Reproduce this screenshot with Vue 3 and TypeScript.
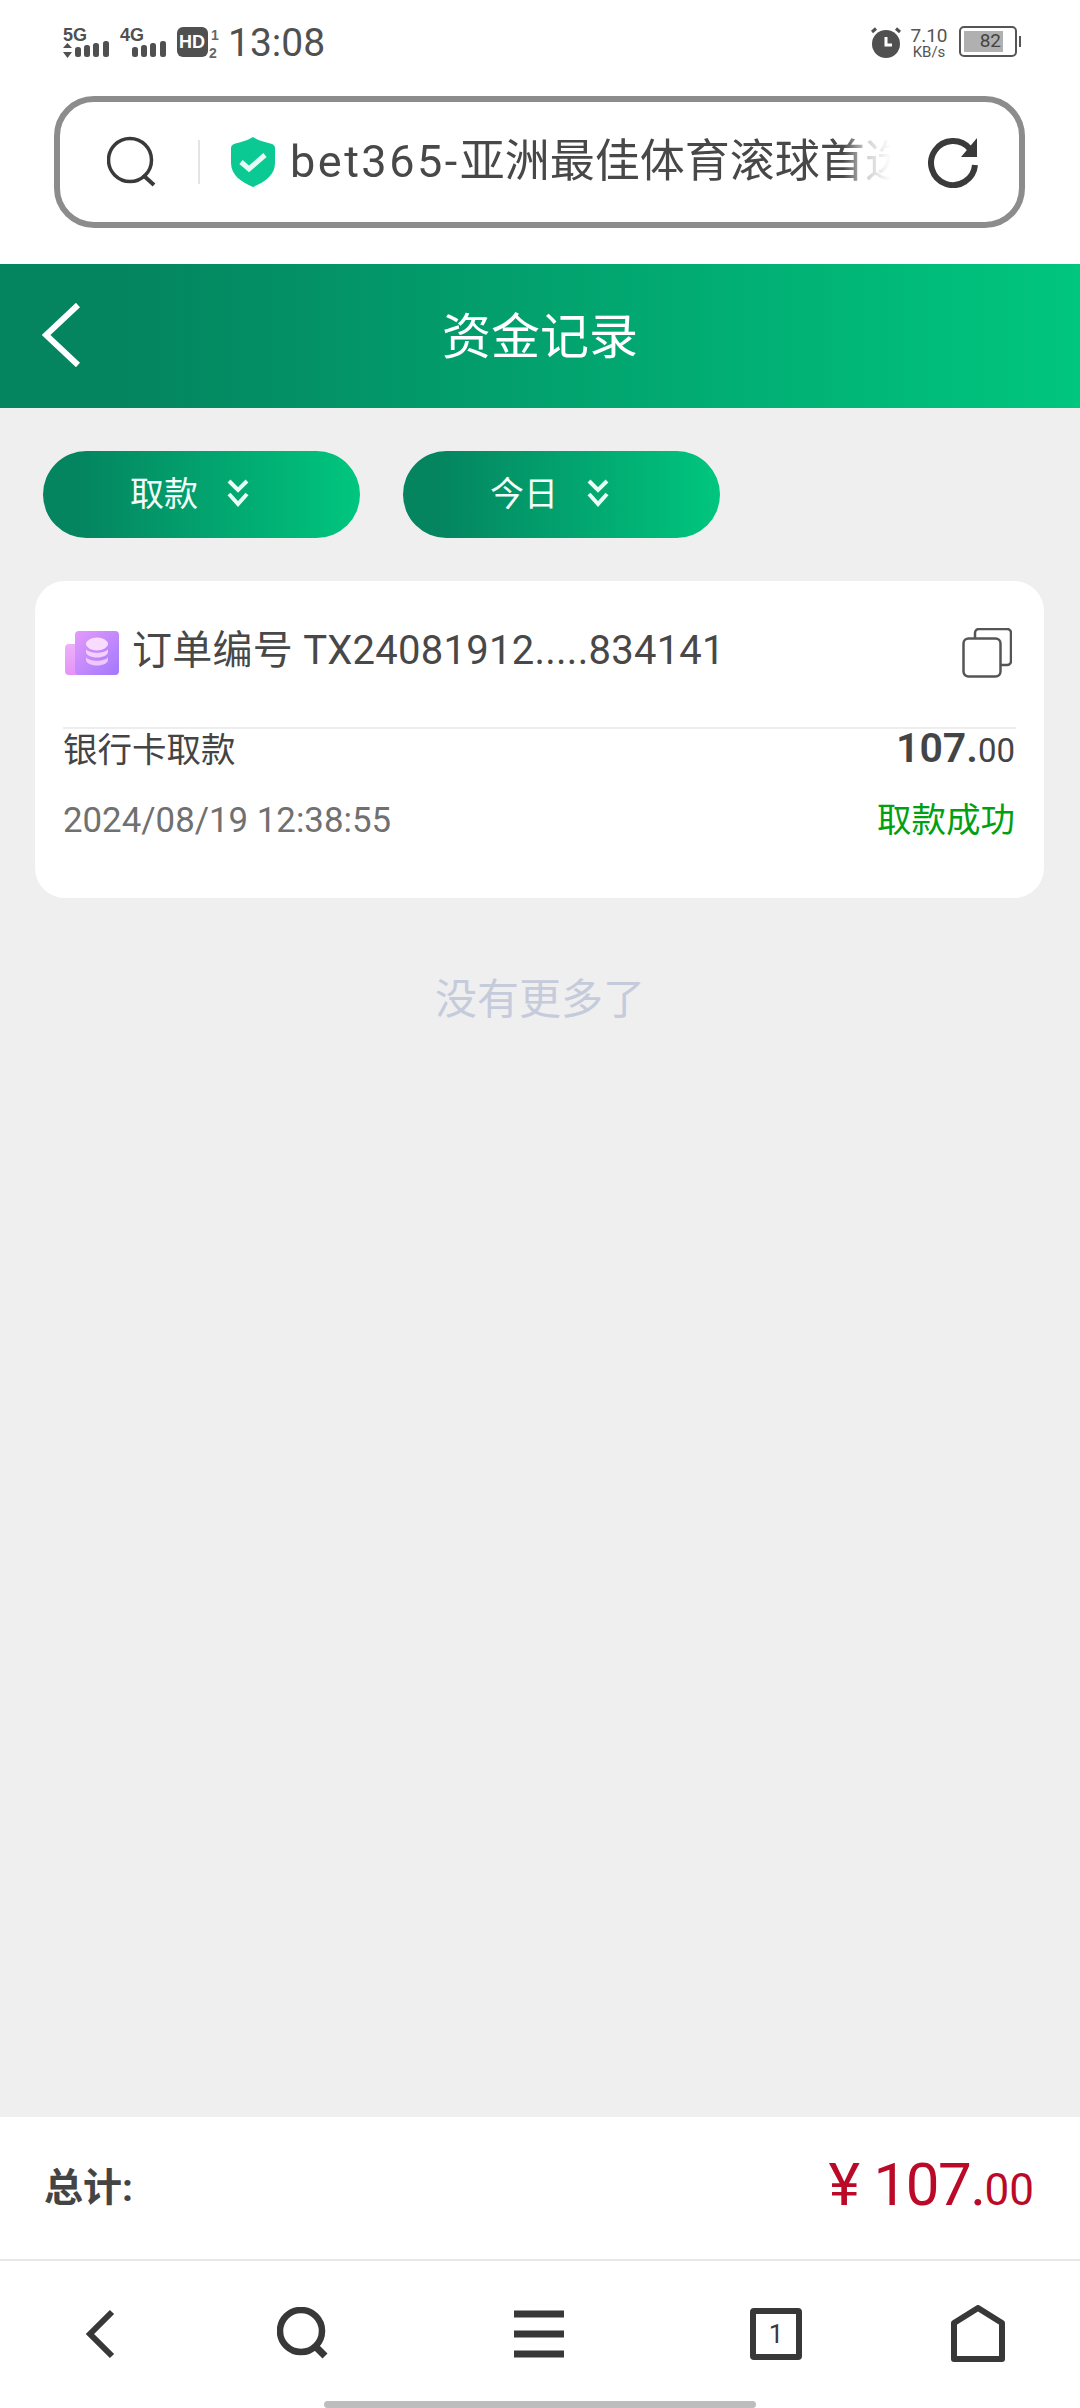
<template>
  <div class="page">
    <div class="status-bar">
      <div class="status-left">
        <svg class="net-icons" width="160" height="34" viewBox="0 0 160 34">
          <text x="0" y="15" class="net-label">5G</text>
          <path d="M4.500 17l4.500 5H0zM4.500 32L0 26h9z" fill="#505050" />
          <rect x="12" y="21" width="6" height="10" rx="2.500" fill="#505050" />
          <rect x="21" y="19" width="6" height="12" rx="2.500" fill="#505050" />
          <rect x="30" y="17" width="6" height="14" rx="2.500" fill="#505050" />
          <rect x="40" y="15" width="6" height="16" rx="2.500" fill="#505050" />
          <text x="57" y="15" class="net-label">4G</text>
          <rect x="69" y="21" width="6" height="10" rx="2.500" fill="#505050" />
          <rect x="78" y="19" width="6" height="12" rx="2.500" fill="#505050" />
          <rect x="87" y="17" width="6" height="14" rx="2.500" fill="#505050" />
          <rect x="97" y="15" width="6" height="16" rx="2.500" fill="#505050" />
          <rect x="114" y="1" width="31" height="30" rx="6" fill="#505050" />
          <text x="116" y="22" class="hd-label">HD</text>
          <text x="148" y="14" class="sim-label">1</text>
          <text x="146" y="32" class="sim-label">2</text>
        </svg>
        <span class="time">13:08</span>
      </div>
      <div class="status-right">
        <svg width="34" height="34" viewBox="0 0 34 34">
          <circle cx="17" cy="18" r="14" fill="#505050" />
          <path d="M17 11v8h6" fill="none" stroke="#fff" stroke-width="3" />
          <path d="M3 6l4-3.500M31 6l-4-3.500" stroke="#505050" stroke-width="3" />
        </svg>
        <div class="speed">
          <span class="speed-num">7.10</span>
          <span class="speed-unit">KB/s</span>
        </div>
        <div class="battery">
          <div class="battery-body">
            <div class="battery-fill" :style="{ width: battery + '%' }"></div>
            <span class="battery-num">{{ battery }}</span>
          </div>
          <div class="battery-nub"></div>
        </div>
      </div>
    </div>

    <div class="address-bar">
      <svg class="addr-search" width="52" height="52" viewBox="0 0 52 52">
        <circle cx="23" cy="24" r="21.500" fill="none" stroke="#3a3a3a" stroke-width="3.500" />
        <path d="M36 39l11 10" stroke="#3a3a3a" stroke-width="4" />
      </svg>
      <div class="addr-line"></div>
      <svg class="addr-shield" width="46" height="50" viewBox="0 0 46 50">
        <path d="M23 0c6 4 13 5 19 7 2 1 3 2 3 4v15c0 12-10 19-22 24C11 45 1 38 1 26V11c0-2 1-3 3-4 6-2 13-3 19-7z" fill="#0bc992" />
        <path d="M11 25l8 7 16-14" fill="none" stroke="#e6fbf3" stroke-width="5" />
      </svg>
      <span class="addr-text"><span class="addr-latin">bet365-</span>亚洲最佳体育滚球首选</span>
      <svg class="addr-reload" width="52" height="52" viewBox="0 0 52 52">
        <path d="M42 13A22 22 0 1 0 47 29" fill="none" stroke="#3a3a3a" stroke-width="6" />
        <path d="M49 2v19H33z" fill="#3a3a3a" />
      </svg>
    </div>

    <div class="header">
      <svg class="back" width="38" height="64" viewBox="0 0 38 64">
        <path d="M36 2L4 32l32 30" fill="none" stroke="#fff" stroke-width="6" />
      </svg>
      <span class="title">资金记录</span>
    </div>

    <main class="content">
      <div class="filters">
        <button v-for="f in filters" :key="f" type="button" class="filter">
          <span class="filter-text">{{ f }}</span>
          <svg width="22" height="28" viewBox="0 0 22 28">
            <path d="M2 2l9 9 9-9M2 15l9 10 9-10" fill="none" stroke="#e8fff6" stroke-width="4" />
          </svg>
        </button>
      </div>

      <section class="card">
        <div class="card-head">
          <svg class="coin" width="54" height="44" viewBox="0 0 54 44">
            <defs>
              <linearGradient id="coinBack" x1="0" y1="0" x2="0" y2="1">
                <stop offset="0" stop-color="#eeb0f8" />
                <stop offset="1" stop-color="#e494f8" />
              </linearGradient>
              <linearGradient id="coinFront" x1="0" y1="0" x2="1" y2="1">
                <stop offset="0" stop-color="#e49afc" />
                <stop offset="1" stop-color="#a278fb" />
              </linearGradient>
            </defs>
            <rect x="0" y="13" width="26" height="31" rx="4" fill="url(#coinBack)" />
            <rect x="10" y="0" width="44" height="44" rx="4" fill="url(#coinFront)" />
            <ellipse cx="32" cy="13" rx="11" ry="6.500" fill="#f8dcff" />
            <path d="M21 18c3 5 19 5 22 0v3c0 3-5 5.500-11 5.500S21 24 21 21z" fill="#f4d0fe" />
            <path d="M21 26c3 5 19 5 22 0v3c0 3-5 5.500-11 5.500S21 32 21 29z" fill="#f0c6fd" />
          </svg>
          <span class="order-no">订单编号 {{ record.orderNo }}</span>
          <svg class="copy" width="50" height="50" viewBox="0 0 50 50">
            <path d="M13 10V5a4 4 0 0 1 4-4h28a4 4 0 0 1 4 4v28a4 4 0 0 1-4 4h-6" fill="none" stroke="#555" stroke-width="2.500" />
            <rect x="1.500" y="10.500" width="37" height="38" rx="5" fill="none" stroke="#555" stroke-width="2.500" />
          </svg>
        </div>
        <div class="card-row">
          <span class="method">{{ record.method }}</span>
          <span class="amount"><b>{{ record.whole }}.</b><small>{{ record.cents }}</small></span>
        </div>
        <div class="card-row second">
          <span class="date">{{ record.date }}</span>
          <span class="state">{{ record.state }}</span>
        </div>
      </section>

      <p class="no-more">没有更多了</p>
    </main>

    <div class="total">
      <span class="total-label">总计:</span>
      <span class="total-amount">
        <i>¥</i>{{ record.whole }}.<small>{{ record.cents }}</small>
      </span>
    </div>

    <nav class="nav">
      <svg width="30" height="50" viewBox="0 0 30 50">
        <path d="M27 3L5 25l22 22" fill="none" stroke="#383838" stroke-width="6" />
      </svg>
      <svg width="52" height="54" viewBox="0 0 52 54">
        <circle cx="24" cy="24" r="21" fill="none" stroke="#383838" stroke-width="6.500" />
        <path d="M37 38l11 11" stroke="#383838" stroke-width="7" />
      </svg>
      <svg width="52" height="48" viewBox="0 0 52 48">
        <path d="M1 4h50M1 24h50M1 44h50" stroke="#383838" stroke-width="7" />
      </svg>
      <div class="tab-count">1</div>
      <svg width="54" height="58" viewBox="0 0 54 58">
        <path d="M27 3L51 18v36H3V18z" fill="none" stroke="#383838" stroke-width="6" stroke-linejoin="round" />
      </svg>
    </nav>
    <div class="home-bar"></div>
  </div>
</template>

<script setup lang="ts">
const battery = 82
const filters = ['取款', '今日']

const record = {
  orderNo: 'TX24081912.....834141',
  method: '银行卡取款',
  whole: '107',
  cents: '00',
  date: '2024/08/19 12:38:55',
  state: '取款成功',
}
</script>

<style>
html,
body {
  margin: 0;
  background: #fff;
}
</style>

<style scoped>
.page {
  position: relative;
  display: flex;
  flex-direction: column;
  height: 2408px;
  overflow: hidden;
  background: #fff;
  color: #444;
  font-family: Roboto, "Noto Sans CJK SC", sans-serif;
}

.status-bar {
  display: flex;
  justify-content: space-between;
  flex: none;
  box-sizing: border-box;
  height: 96px;
  padding: 26px 59px 0 63px;
}

.status-left,
.status-right {
  display: flex;
  align-items: flex-start;
}

.net-label {
  font: 700 18px "Liberation Sans", sans-serif;
  fill: #505050;
}

.hd-label {
  font: 700 18px "Liberation Sans", sans-serif;
  fill: #fff;
}

.sim-label {
  font: 700 14px "Liberation Sans", sans-serif;
  fill: #666;
}

.time {
  margin-left: 5px;
  font-size: 39px;
  line-height: 34px;
  color: #505050;
}

.status-right svg {
  margin-right: 7px;
}

.speed {
  display: flex;
  flex-direction: column;
  align-items: center;
  width: 38px;
  margin-right: 11px;
  line-height: 1;
  color: #555;
}

.speed-num {
  font-size: 19px;
}

.speed-unit {
  font-size: 15px;
}

.battery {
  display: flex;
  align-items: center;
  height: 31px;
}

.battery-body {
  position: relative;
  box-sizing: border-box;
  width: 58px;
  height: 31px;
  padding: 3px;
  border: 2.500px solid #555;
  border-radius: 5px;
}

.battery-fill {
  height: 100%;
  background: #b0b0b0;
}

.battery-num {
  position: absolute;
  top: 2px;
  right: 14px;
  font-size: 19px;
  line-height: 22px;
  color: #444;
}

.battery-nub {
  width: 2px;
  height: 11px;
  margin-left: 2px;
  background: #555;
}

.address-bar {
  display: flex;
  align-items: center;
  flex: none;
  box-sizing: border-box;
  width: 971px;
  height: 132px;
  margin: 0 0 36px 54px;
  padding-left: 47px;
  border: 6px solid #8c8c8c;
  border-radius: 40px;
}

.addr-line {
  flex: none;
  width: 2px;
  height: 44px;
  margin: 0 30px 0 39px;
  background: #e4e4e4;
}

.addr-text {
  flex: none;
  width: 601px;
  margin-left: 14px;
  overflow: hidden;
  font-size: 45px;
  line-height: 56px;
  white-space: nowrap;
  color: #484848;
  -webkit-mask-image: linear-gradient(to right, #000 92%, rgba(0, 0, 0, 0.25) 96%, transparent 100%);
  mask-image: linear-gradient(to right, #000 92%, rgba(0, 0, 0, 0.25) 96%, transparent 100%);
}

.addr-latin {
  letter-spacing: 2.500px;
}

.addr-reload {
  flex: none;
  margin-left: 37px;
}

.header {
  position: relative;
  display: flex;
  justify-content: center;
  align-items: center;
  flex: none;
  box-sizing: border-box;
  height: 144px;
  padding-bottom: 8px;
  background: linear-gradient(to right, #04845f 10%, #00c67f 100%);
}

.back {
  position: absolute;
  top: 39px;
  left: 42px;
}

.title {
  font-size: 49px;
  color: #fff;
}

.content {
  flex: 1;
  background: #efefef;
}

.filters {
  display: flex;
  gap: 43px;
  padding: 43px 0 43px 43px;
}

.filter {
  display: flex;
  justify-content: center;
  align-items: center;
  gap: 29px;
  width: 317px;
  height: 87px;
  padding: 0 24px 3px 0;
  border: none;
  border-radius: 44px;
  background: linear-gradient(to right, #04845f 10%, #00c67f 100%);
  font: inherit;
  font-size: 34px;
  color: #f2fffa;
}

.filter-text {
  margin-bottom: 3px;
}

.card {
  box-sizing: border-box;
  width: 1009px;
  margin-left: 35px;
  padding: 0 28px 59px;
  border-radius: 30px;
  background: #fff;
}

.card-head {
  display: flex;
  align-items: center;
  box-sizing: border-box;
  height: 148px;
  padding: 0 4px 8px 2px;
  border-bottom: 2px solid #eeeeee;
}

.coin,
.copy {
  margin-top: 6px;
}

.order-no {
  flex: 1;
  margin: 0 0 6px 13px;
  font-size: 40px;
  letter-spacing: 0.250px;
  white-space: nowrap;
  color: #484848;
}

.card-row {
  display: flex;
  justify-content: space-between;
  align-items: baseline;
  height: 38px;
  padding-right: 1px;
  line-height: 38px;
}

.card-row.second {
  margin-top: 34px;
}

.method {
  font-size: 34.500px;
  color: #444;
}

.amount {
  font-size: 41px;
  color: #444;
}

.amount b {
  font-weight: 600;
}

.amount small {
  font-size: 33px;
}

.date {
  font-size: 34.800px;
  color: #707070;
}

.state {
  font-size: 34.500px;
  color: #00a013;
}

.no-more {
  margin: 80px 0 0;
  font-size: 42px;
  line-height: 44px;
  text-align: center;
  color: #c6cbdb;
}

.total {
  display: flex;
  justify-content: space-between;
  align-items: center;
  flex: none;
  box-sizing: border-box;
  height: 144px;
  padding: 0 46px 7px 44px;
  border-bottom: 2px solid #e8e8e8;
  background: #fff;
}

.total-label {
  margin-bottom: 2px;
  font-size: 39px;
  font-weight: 700;
  color: #444;
}

.total-amount {
  font-size: 60px;
  letter-spacing: -1.500px;
  color: #bb0a28;
}

.total-amount i {
  margin-right: 15px;
  font-style: normal;
}

.total-amount small {
  font-size: 44px;
  letter-spacing: 0;
}

.nav {
  display: grid;
  grid-template-columns: 200px 206px 266px 208px 196px;
  place-items: center;
  flex: none;
  box-sizing: border-box;
  height: 147px;
  padding-bottom: 2px;
  background: #fff;
}

.tab-count {
  display: flex;
  justify-content: center;
  align-items: center;
  box-sizing: border-box;
  width: 52px;
  height: 52px;
  border: 6px solid #383838;
  border-radius: 4px;
  font-size: 26px;
  color: #383838;
}

.home-bar {
  position: absolute;
  bottom: 0;
  left: 324px;
  width: 432px;
  height: 7px;
  border-radius: 4px;
  background: #bdbdbd;
}
</style>
